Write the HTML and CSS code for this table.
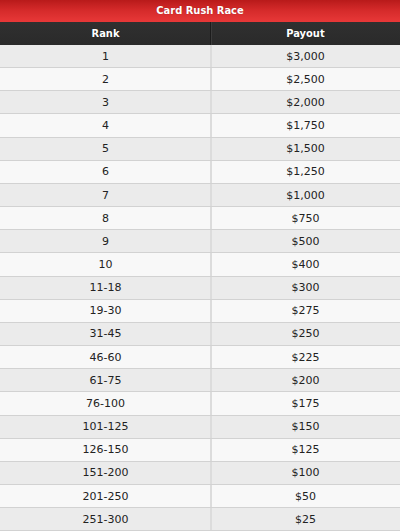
FILE: index.html
```html
<!DOCTYPE html>
<html>
<head>
<meta charset="utf-8">
<link rel="stylesheet" href="styles.css">
</head>
<body>
<div class="race">
  <div class="title">Card Rush Race</div>
  <table class="payouts">
    <thead>
      <tr><th class="c-rank">Rank</th><th class="c-pay">Payout</th></tr>
    </thead>
    <tbody>
      <tr><td class="c-rank">1</td><td class="c-pay">$3,000</td></tr>
      <tr><td class="c-rank">2</td><td class="c-pay">$2,500</td></tr>
      <tr><td class="c-rank">3</td><td class="c-pay">$2,000</td></tr>
      <tr><td class="c-rank">4</td><td class="c-pay">$1,750</td></tr>
      <tr><td class="c-rank">5</td><td class="c-pay">$1,500</td></tr>
      <tr><td class="c-rank">6</td><td class="c-pay">$1,250</td></tr>
      <tr><td class="c-rank">7</td><td class="c-pay">$1,000</td></tr>
      <tr><td class="c-rank">8</td><td class="c-pay">$750</td></tr>
      <tr><td class="c-rank">9</td><td class="c-pay">$500</td></tr>
      <tr><td class="c-rank">10</td><td class="c-pay">$400</td></tr>
      <tr><td class="c-rank">11-18</td><td class="c-pay">$300</td></tr>
      <tr><td class="c-rank">19-30</td><td class="c-pay">$275</td></tr>
      <tr><td class="c-rank">31-45</td><td class="c-pay">$250</td></tr>
      <tr><td class="c-rank">46-60</td><td class="c-pay">$225</td></tr>
      <tr><td class="c-rank">61-75</td><td class="c-pay">$200</td></tr>
      <tr><td class="c-rank">76-100</td><td class="c-pay">$175</td></tr>
      <tr><td class="c-rank">101-125</td><td class="c-pay">$150</td></tr>
      <tr><td class="c-rank">126-150</td><td class="c-pay">$125</td></tr>
      <tr><td class="c-rank">151-200</td><td class="c-pay">$100</td></tr>
      <tr><td class="c-rank">201-250</td><td class="c-pay">$50</td></tr>
      <tr><td class="c-rank">251-300</td><td class="c-pay">$25</td></tr>
    </tbody>
  </table>
</div>
</body>
</html>
```
FILE: styles.css
```css
html, body {
  margin: 0;
  padding: 0;
  background: #ffffff;
}
body {
  font-family: "DejaVu Sans", Verdana, sans-serif;
  font-size: 11px;
  color: #222222;
}
.race {
  width: 400px;
}
.title {
  height: 22px;
  line-height: 22px;
  text-align: center;
  color: #ffffff;
  font-family: "DejaVu Sans Condensed", "DejaVu Sans", sans-serif;
  font-weight: bold;
  font-size: 11px;
  background: linear-gradient(to bottom, #b81a1a 0%, #d42a2a 45%, #e83838 100%);
  text-shadow: 0 0 1px rgba(0,0,0,0.3);
}
.payouts {
  width: 400px;
  border-collapse: collapse;
  table-layout: fixed;
}
.payouts th {
  height: 23px;
  padding: 0;
  color: #ffffff;
  font-family: "DejaVu Sans Condensed", "DejaVu Sans", sans-serif;
  font-weight: bold;
  font-size: 11px;
  background: linear-gradient(to bottom, #303030 0%, #2a2a2a 100%);
  text-align: center;
  vertical-align: middle;
  text-shadow: 0 0 1px rgba(0,0,0,0.6);
}
.payouts th.c-rank {
  width: 211px;
  box-shadow: inset -1px 0 0 #1c1c1c;
}
.payouts th.c-pay {
  box-shadow: inset 1px 0 0 #3c3c3c;
}
.payouts td {
  height: 22.17px;
  padding: 0;
  text-align: center;
  vertical-align: middle;
  border-bottom: 1px solid #d2d2d2;
}
.payouts td.c-rank {
  box-shadow: inset -1px 0 0 #dcdcdc;
}
.payouts td.c-pay {
  box-shadow: inset 1px 0 0 #dcdcdc;
}
.payouts tbody tr:nth-child(odd) td {
  background: #ebebeb;
}
.payouts tbody tr:nth-child(even) td {
  background: #f8f8f8;
}
```
